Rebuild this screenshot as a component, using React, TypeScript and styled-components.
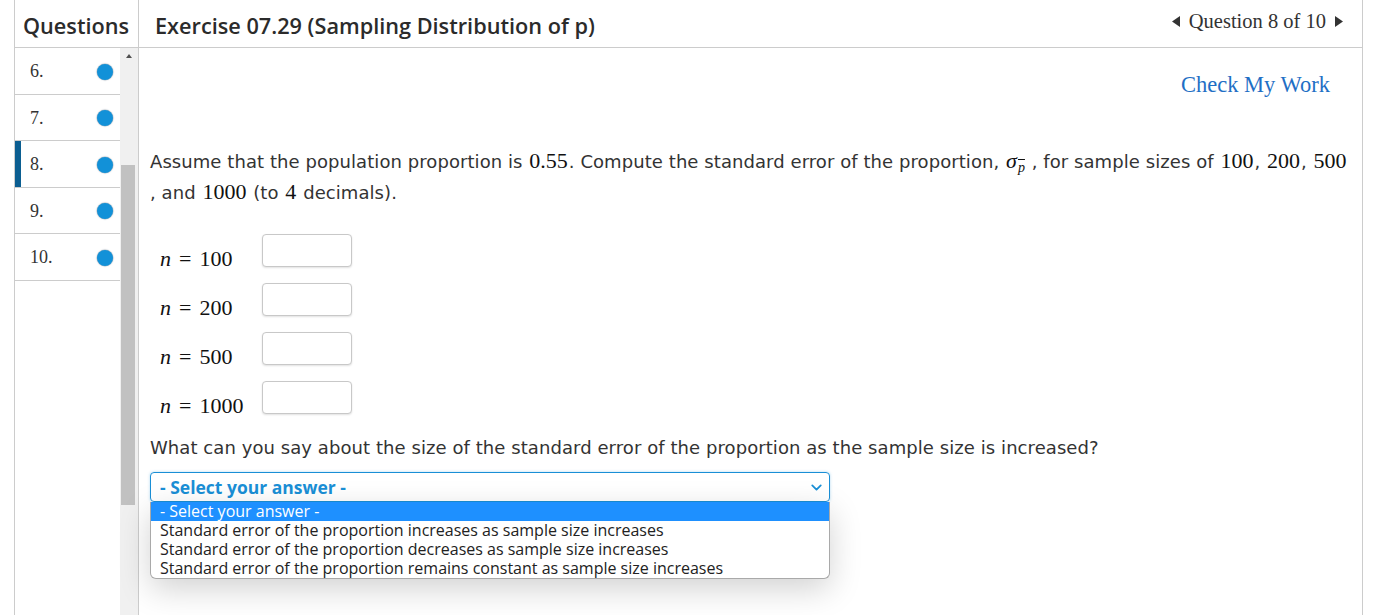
import React from 'react';
import styled, { createGlobalStyle } from 'styled-components';
import { ChevronDown } from 'lucide-react';

const GlobalStyle = createGlobalStyle`
  html, body {
    margin: 0;
    padding: 0;
    background: #ffffff;
    height: 100%;
  }
  #root {
    height: 100%;
  }
  * {
    box-sizing: border-box;
  }
`;

const Frame = styled.div`
  margin-left: 14px;
  width: 1349px;
  height: 615px;
  border-left: 1px solid #cccccc;
  border-right: 1px solid #cccccc;
  display: flex;
  overflow: hidden;
`;

const Sidebar = styled.aside`
  width: 124px;
  flex-shrink: 0;
  border-right: 1px solid #cccccc;
  display: flex;
  flex-direction: column;
`;

const SideHeader = styled.div`
  height: 48px;
  border-bottom: 1px solid #cccccc;
  display: flex;
  align-items: center;
  padding: 3px 0 0 8px;
  font-family: 'Open Sans', sans-serif;
  font-weight: 600;
  font-size: 21.7px;
  color: #2b2b2b;
`;

const SideBody = styled.div`
  flex: 1;
  display: flex;
`;

const QuestionList = styled.ul`
  list-style: none;
  margin: 0;
  padding: 0;
  width: 105px;
`;

const QuestionItem = styled.li<{ active?: boolean }>`
  position: relative;
  height: 46.5px;
  border-bottom: 1px solid #cccccc;
  display: flex;
  align-items: center;
  justify-content: space-between;
  padding: 2px 7px 0 15px;
  font-family: 'Liberation Serif', 'DejaVu Serif', serif;
  font-size: 18px;
  color: #333333;

  &::before {
    content: '';
    display: ${p => (p.active ? 'block' : 'none')};
    position: absolute;
    left: 0;
    top: 0;
    bottom: 0;
    width: 6px;
    background: #0b5e91;
  }
`;

const StatusDot = styled.span`
  width: 16px;
  height: 16px;
  border-radius: 50%;
  background: #1291d8;
  box-shadow: 0 0 1px 0.5px rgba(90, 110, 130, 0.55);
`;

const ScrollTrack = styled.div`
  width: 18px;
  background: #f0f0f0;
  display: flex;
  flex-direction: column;
  align-items: center;
`;

const ScrollArrow = styled.div`
  margin-top: 6px;
  width: 0;
  height: 0;
  border-left: 3.5px solid transparent;
  border-right: 3.5px solid transparent;
  border-bottom: 4px solid #505050;
`;

const ScrollThumb = styled.div`
  margin-top: 107px;
  width: 14px;
  height: 340px;
  background: #c1c1c1;
  margin-right: 2px;
`;

const Main = styled.main`
  flex: 1;
  display: flex;
  flex-direction: column;
  min-width: 0;
`;

const MainHeader = styled.header`
  height: 48px;
  border-bottom: 1px solid #cccccc;
  display: flex;
  align-items: center;
  justify-content: space-between;
  padding: 3px 19px 0 16px;
`;

const Title = styled.h1`
  margin: 0;
  font-family: 'Open Sans', sans-serif;
  font-weight: 600;
  font-size: 21.7px;
  color: #2b2b2b;
`;

const Pager = styled.div`
  display: flex;
  align-items: center;
  gap: 9px;
  margin-top: -8px;
  font-family: 'Liberation Serif', 'DejaVu Serif', serif;
  font-size: 20.5px;
  color: #333333;
`;

const Content = styled.section`
  flex: 1;
  padding: 24px 10px 0 11px;
`;

const CheckRow = styled.div`
  display: flex;
  justify-content: flex-end;
  padding-right: 22px;
`;

const CheckLink = styled.a`
  font-family: 'Liberation Serif', 'DejaVu Serif', serif;
  font-size: 22.5px;
  color: #1f6fc5;
  text-decoration: none;
  cursor: pointer;
`;

const Prompt = styled.p`
  margin: 48px 0 0;
  font-family: 'DejaVu Sans', Verdana, sans-serif;
  font-size: 18px;
  line-height: 31px;
  letter-spacing: 0.07px;
  color: #333333;
`;

const Math = styled.span`
  line-height: 1;
  margin: 0 1px;
  font-family: 'Liberation Serif', 'DejaVu Serif', serif;
  font-size: 22px;
  letter-spacing: 0;
  color: #111111;
`;

const MathVar = styled.i`
  font-style: italic;
`;

const MathOp = styled.span`
  margin: 0 8px;
`;

const Sub = styled.sub`
  font-size: 14px;
  line-height: 1;
  vertical-align: -4px;
  text-decoration: overline;
  font-style: italic;
  margin-left: 1px;
`;

const AnswerGrid = styled.div`
  margin-top: 26px;
  display: grid;
  grid-template-columns: 102px 90px;
  row-gap: 16px;
  padding-left: 10px;
  align-items: end;
`;

const AnswerLabel = styled.span`
  font-family: 'Liberation Serif', 'DejaVu Serif', serif;
  font-size: 22px;
  line-height: 1;
  color: #111111;
  margin-bottom: -3px;
  white-space: nowrap;
`;

const AnswerInput = styled.input`
  width: 90px;
  height: 33px;
  border: 1px solid #c8c8c8;
  border-radius: 4px;
  box-shadow: 0 1px 2px rgba(0, 0, 0, 0.12);
`;

const Question = styled.p`
  margin: 23px 0 0;
  font-family: 'DejaVu Sans', Verdana, sans-serif;
  font-size: 18px;
  letter-spacing: 0.07px;
  color: #333333;
`;

const SelectWrap = styled.div`
  position: relative;
  margin-top: 14px;
  width: 680px;
`;

const SelectBox = styled.div`
  height: 30px;
  border: 1px solid #1a8fd6;
  border-radius: 4px;
  display: flex;
  align-items: center;
  justify-content: space-between;
  padding: 0 4px 0 9px;
  font-family: 'Open Sans', sans-serif;
  font-weight: 700;
  font-size: 17.5px;
  color: #1a8fd6;
  box-shadow: 0 0 3px rgba(26, 143, 214, 0.35);
`;

const OptionList = styled.ul`
  position: absolute;
  top: 30px;
  left: 0;
  right: 0;
  margin: 0;
  padding: 0;
  list-style: none;
  background: #ffffff;
  border: 1px solid #a9a9a9;
  border-top: none;
  border-radius: 0 0 6px 6px;
  overflow: hidden;
  box-shadow: 0 10px 32px rgba(0, 0, 0, 0.18);
  font-family: 'Open Sans', sans-serif;
  font-size: 16px;
`;

const Option = styled.li<{ selected?: boolean }>`
  height: 19px;
  line-height: 19px;
  padding-left: 9px;
  color: ${p => (p.selected ? '#ffffff' : '#222222')};
  background: ${p => (p.selected ? '#1e90ff' : 'transparent')};
  white-space: nowrap;
`;

const Triangle = ({ dir }: { dir: 'left' | 'right' }) => (
  <svg width="8" height="11" viewBox="0 0 8 11">
    {dir === 'left' ? <path d="M8 0 L0 5.5 L8 11 Z" fill="#333" /> : <path d="M0 0 L8 5.5 L0 11 Z" fill="#333" />}
  </svg>
);

const questions = [6, 7, 8, 9, 10];
const sizes = [100, 200, 500, 1000];
const options = [
  '- Select your answer -',
  'Standard error of the proportion increases as sample size increases',
  'Standard error of the proportion decreases as sample size increases',
  'Standard error of the proportion remains constant as sample size increases',
];

export default function App() {
  return (
    <>
      <GlobalStyle />
      <Frame>
        <Sidebar>
          <SideHeader>Questions</SideHeader>
          <SideBody>
            <QuestionList>
              {questions.map(q => (
                <QuestionItem key={q} active={q === 8}>
                  <span>{q}.</span>
                  <StatusDot />
                </QuestionItem>
              ))}
            </QuestionList>
            <ScrollTrack>
              <ScrollArrow />
              <ScrollThumb />
            </ScrollTrack>
          </SideBody>
        </Sidebar>
        <Main>
          <MainHeader>
            <Title>Exercise 07.29 (Sampling Distribution of p)</Title>
            <Pager>
              <Triangle dir="left" />
              <span>Question 8 of 10</span>
              <Triangle dir="right" />
            </Pager>
          </MainHeader>
          <Content>
            <CheckRow>
              <CheckLink>Check My Work</CheckLink>
            </CheckRow>
            <Prompt>
              Assume that the population proportion is <Math>0.55</Math>. Compute the standard error of the
              proportion, <Math><MathVar>σ</MathVar><Sub>p</Sub></Math> , for sample sizes of <Math>100</Math>,{' '}
              <Math>200</Math>, <Math>500</Math>
              <br />, and <Math>1000</Math> (to <Math>4</Math> decimals).
            </Prompt>
            <AnswerGrid>
              {sizes.map(s => (
                <React.Fragment key={s}>
                  <AnswerLabel>
                    <MathVar>n</MathVar>
                    <MathOp>=</MathOp>
                    {s}
                  </AnswerLabel>
                  <AnswerInput type="text" />
                </React.Fragment>
              ))}
            </AnswerGrid>
            <Question>
              What can you say about the size of the standard error of the proportion as the sample size is increased?
            </Question>
            <SelectWrap>
              <SelectBox>
                <span>- Select your answer -</span>
                <ChevronDown size={17} strokeWidth={2.5} />
              </SelectBox>
              <OptionList>
                {options.map((o, i) => (
                  <Option key={o} selected={i === 0}>
                    {o}
                  </Option>
                ))}
              </OptionList>
            </SelectWrap>
          </Content>
        </Main>
      </Frame>
    </>
  );
}
